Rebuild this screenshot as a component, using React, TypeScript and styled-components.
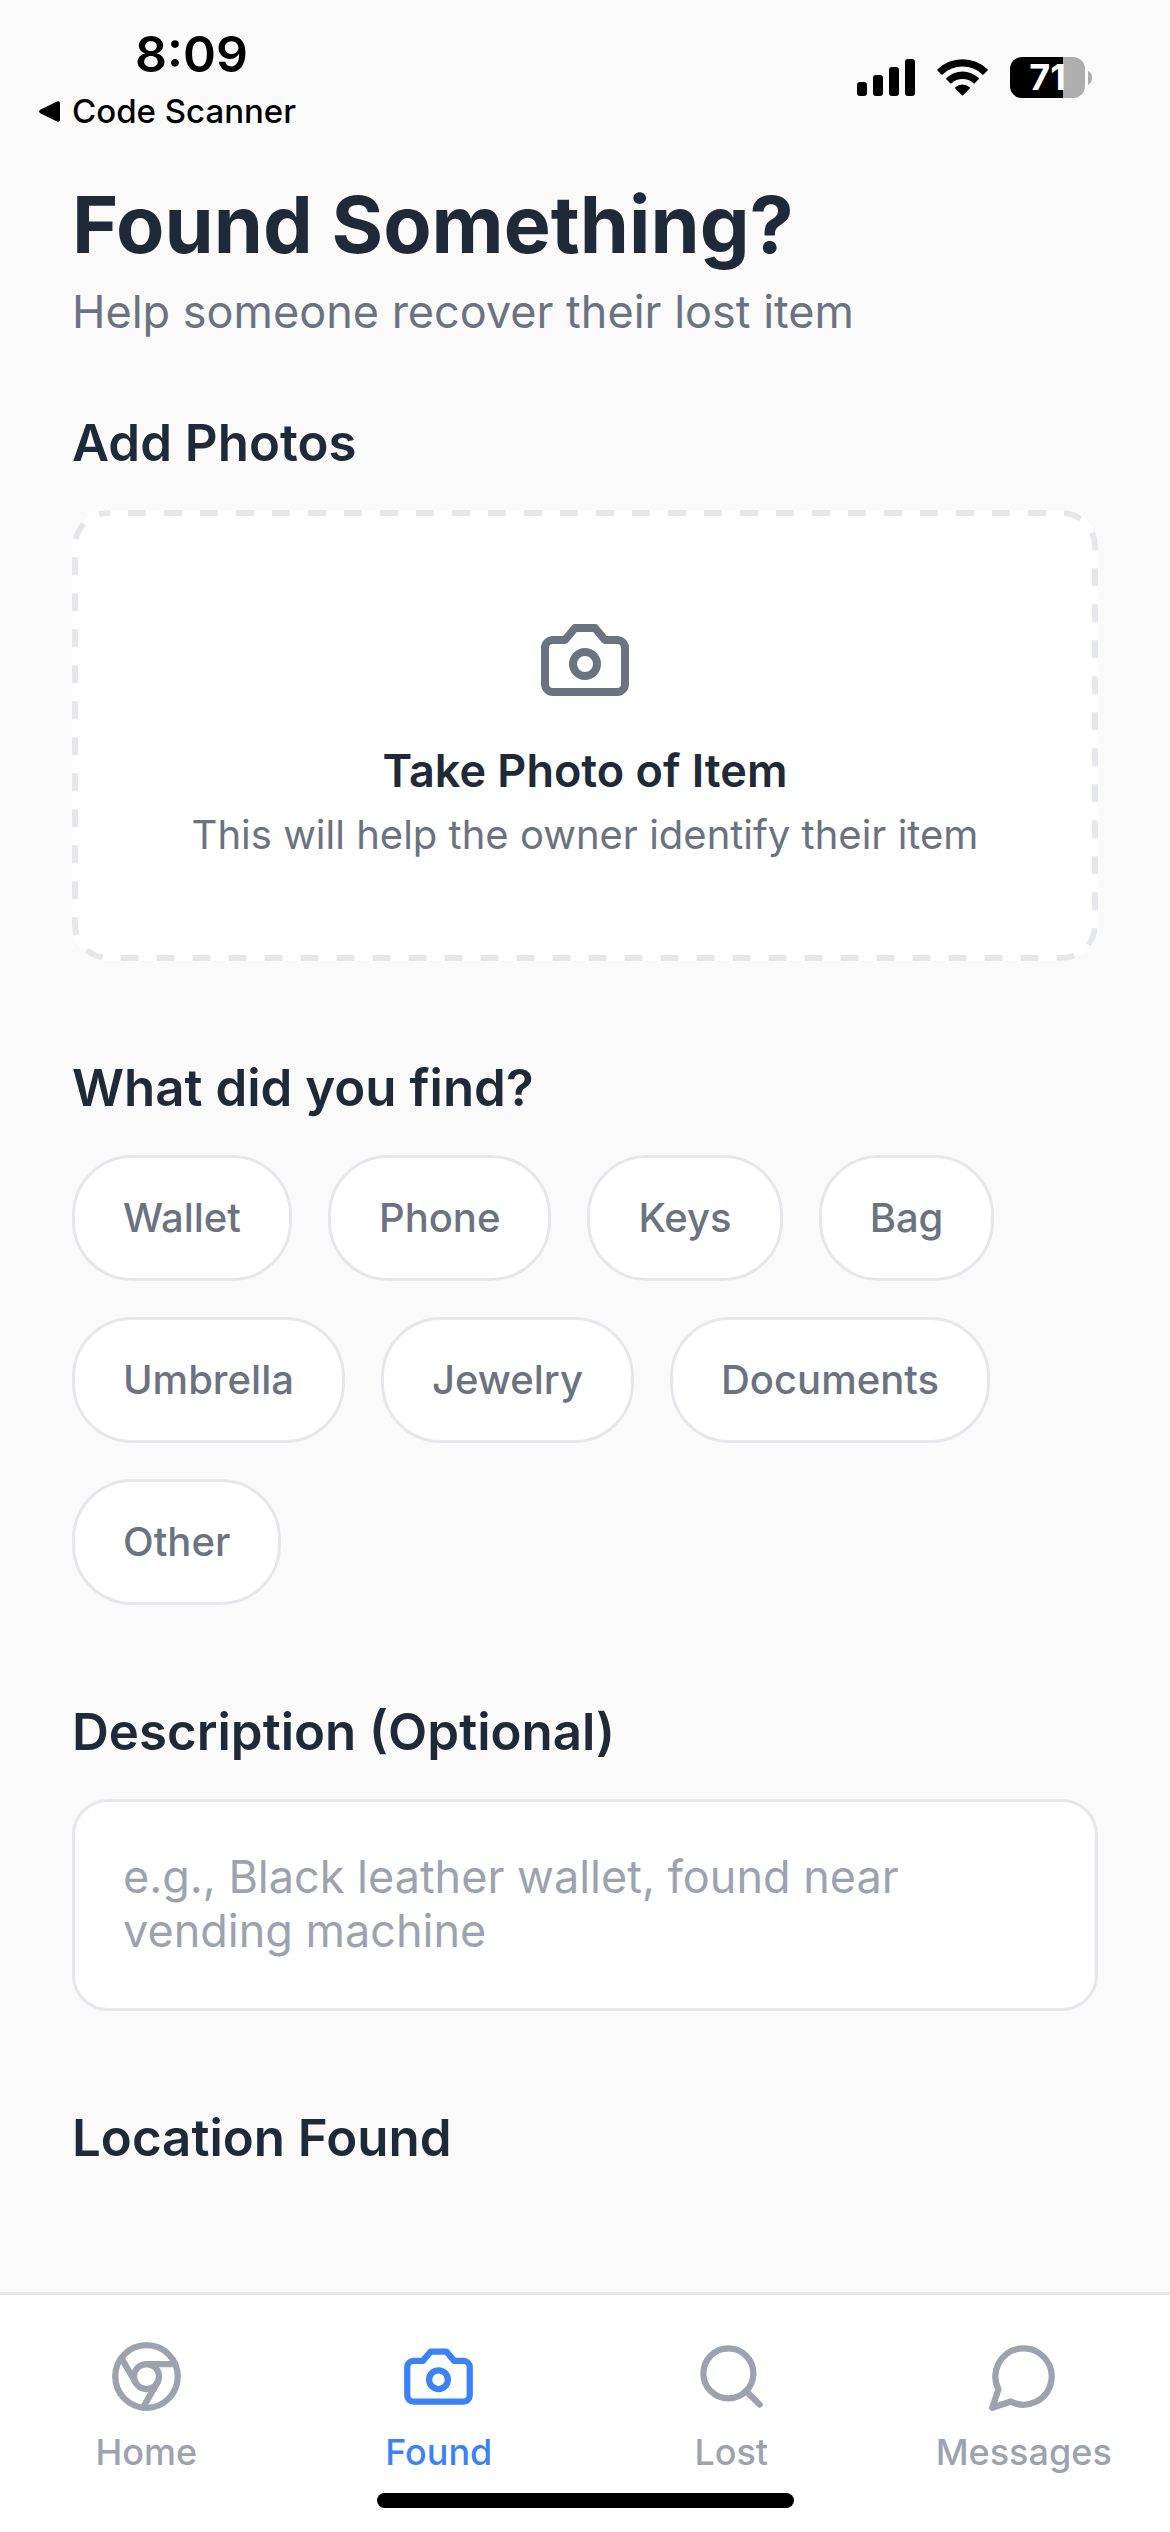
import React, { useState } from "react";
import styled, { createGlobalStyle } from "styled-components";

const color = {
  page: "#fafafa",
  surface: "#ffffff",
  line: "#e5e7eb",
  ink: "#1f2937",
  muted: "#6b7280",
  faint: "#9ca3af",
  accent: "#3b82f6",
};

const GlobalStyle = createGlobalStyle`
  *, *::before, *::after { box-sizing: border-box; }
  body {
    margin: 0;
    background: ${color.page};
    color: ${color.ink};
    font-family: Inter, "Liberation Sans", sans-serif;
  }
  button, textarea { font: inherit; color: inherit; }
  h1, h2, p { margin: 0; }
`;

const Screen = styled.div`
  display: flex;
  flex-direction: column;
  min-height: 100vh;
`;

/* ---------- status bar ---------- */

const StatusBar = styled.header`
  display: flex;
  justify-content: space-between;
  align-items: flex-start;
  padding: 24px 78px 8px 39px;
  color: #000;
`;

const StatusLeft = styled.div`
  display: flex;
  flex-direction: column;
  align-items: flex-start;
  gap: 6px;
`;

const Clock = styled.time`
  padding-left: 96px;
  font-size: 50px;
  line-height: 60px;
  font-weight: 600;
`;

const BackLink = styled.button`
  display: flex;
  align-items: center;
  gap: 12px;
  padding: 0;
  border: 0;
  background: none;
  font-size: 33px;
  line-height: 42px;
  font-weight: 500;
  cursor: pointer;
`;

const StatusIcons = styled.div`
  display: flex;
  align-items: center;
  gap: 22px;
  padding-top: 33px;
`;

const Battery = styled.div`
  display: flex;
  align-items: center;
  gap: 3px;
`;

const BatteryBody = styled.div`
  display: flex;
  align-items: center;
  justify-content: center;
  width: 75px;
  height: 41px;
  border-radius: 12px;
  background: linear-gradient(to right, #000 71%, #aeaeae 71%);
  color: #fff;
  font-size: 36px;
  line-height: 41px;
  font-weight: 700;
`;

/* ---------- form ---------- */

const Content = styled.main`
  flex: 1;
  display: flex;
  flex-direction: column;
  gap: 96px;
  padding: 36px 72px 72px;
`;

const Intro = styled.div`
  display: flex;
  flex-direction: column;
  gap: 72px;
`;

const Heading = styled.div`
  display: flex;
  flex-direction: column;
  gap: 12px;
`;

const Title = styled.h1`
  font-size: 79px;
  line-height: 96px;
  font-weight: 700;
`;

const Subtitle = styled.p`
  font-size: 45px;
  line-height: 56px;
  color: ${color.muted};
`;

const Section = styled.section`
  display: flex;
  flex-direction: column;
  gap: 36px;
`;

const SectionTitle = styled.h2`
  font-size: 51px;
  line-height: 62px;
  font-weight: 600;
`;

const PhotoButton = styled.button`
  position: relative;
  display: flex;
  flex-direction: column;
  align-items: center;
  padding: 102px 48px;
  border: 0;
  border-radius: 36px;
  background: ${color.surface};
  color: ${color.muted};
  cursor: pointer;
`;

const DashedOutline = styled.svg`
  position: absolute;
  inset: 0;
  width: 100%;
  height: 100%;
  overflow: hidden;
  border-radius: 36px;

  rect {
    x: 3px;
    y: 3px;
    width: calc(100% - 6px);
    height: calc(100% - 6px);
    rx: 33px;
    fill: none;
    stroke: ${color.line};
    stroke-width: 6px;
    stroke-dasharray: 18 18;
    stroke-dashoffset: 16;
  }
`;

const PhotoTitle = styled.span`
  margin-top: 36px;
  font-size: 45px;
  line-height: 54px;
  font-weight: 600;
  color: ${color.ink};
`;

const PhotoHint = styled.span`
  margin-top: 12px;
  font-size: 40px;
  line-height: 49px;
`;

const Chips = styled.div`
  display: flex;
  flex-wrap: wrap;
  gap: 36px;
`;

const Chip = styled.button<{ $selected: boolean }>`
  padding: 36px 48px;
  border: 3px solid ${(p) => (p.$selected ? color.accent : color.line)};
  border-radius: 60px;
  background: ${color.surface};
  color: ${(p) => (p.$selected ? color.accent : color.muted)};
  font-size: 40px;
  line-height: 48px;
  font-weight: 500;
  cursor: pointer;
`;

const DescriptionField = styled.textarea`
  display: block;
  width: 100%;
  min-height: 212px;
  padding: 48px;
  border: 3px solid ${color.line};
  border-radius: 36px;
  background: ${color.surface};
  color: ${color.ink};
  font-size: 45px;
  line-height: 54px;
  resize: none;
  overflow: hidden;
  outline: none;

  &::placeholder {
    color: ${color.faint};
    opacity: 1;
  }
`;

/* ---------- tab bar ---------- */

const TabBar = styled.footer`
  position: sticky;
  bottom: 0;
  display: flex;
  flex-direction: column;
  align-items: center;
  gap: 19px;
  padding: 44px 0 24px;
  border-top: 3px solid ${color.line};
  background: ${color.surface};
`;

const Tabs = styled.nav`
  display: grid;
  grid-template-columns: repeat(4, 1fr);
  width: 100%;
`;

const Tab = styled.a<{ $active?: boolean }>`
  display: flex;
  flex-direction: column;
  align-items: center;
  gap: 16px;
  color: ${(p) => (p.$active ? color.accent : color.faint)};
  font-size: 36px;
  line-height: 44px;
  font-weight: 500;
  text-decoration: none;
`;

const HomeIndicator = styled.div`
  width: 417px;
  height: 15px;
  border-radius: 8px;
  background: #000;
`;

/* ---------- icons ---------- */

const LineIcon = ({ size, children }: { size: number; children: React.ReactNode }) => (
  <svg
    width={size}
    height={size}
    viewBox="0 0 24 24"
    fill="none"
    stroke="currentColor"
    strokeWidth={2}
    strokeLinecap="round"
    strokeLinejoin="round"
    aria-hidden="true"
  >
    {children}
  </svg>
);

const CameraShape = () => (
  <>
    <path d="M14.5 4h-5L7 7H4a2 2 0 0 0-2 2v9a2 2 0 0 0 2 2h16a2 2 0 0 0 2-2V9a2 2 0 0 0-2-2h-3l-2.5-3z" />
    <circle cx="12" cy="13" r="3" />
  </>
);

const ChromeShape = () => (
  <>
    <circle cx="12" cy="12" r="10" />
    <circle cx="12" cy="12" r="4" />
    <path d="M21.17 8H12M3.95 6.06 8.54 14M10.88 21.94 15.46 14" />
  </>
);

const SearchShape = () => (
  <>
    <circle cx="11" cy="11" r="8" />
    <path d="m21 21-4.3-4.3" />
  </>
);

const MessageShape = () => <path d="M7.9 20A9 9 0 1 0 4 16.1L2 22Z" />;

const BackTriangle = () => (
  <svg width="21" height="21" viewBox="0 0 21 21" aria-hidden="true">
    <path d="M1.2 8.8 18 .6Q21-.6 21 2.4V18.6Q21 21.6 18 20.4L1.2 12.2Q-1 10.5 1.2 8.8Z" />
  </svg>
);

const SignalIcon = () => (
  <svg width="58" height="37" viewBox="0 0 58 37" role="img" aria-label="Signal">
    <rect x="0" y="23" width="10" height="14" rx="3" />
    <rect x="16" y="16" width="10" height="21" rx="3" />
    <rect x="32" y="8" width="10" height="29" rx="3" />
    <rect x="48" y="0" width="10" height="37" rx="3" />
  </svg>
);

const WifiIcon = () => (
  <svg width="51" height="37" viewBox="0 0 51 37" role="img" aria-label="Wi-Fi">
    <path d="M.5 10.3A36 36 0 0 1 50.5 10.3Q51 11 50.5 11.5L46.6 15.4Q46 16 45.4 15.4A29 29 0 0 0 5.6 15.4Q5 16 4.4 15.4L.5 11.5Q0 11 .5 10.3Z" />
    <path d="M9.3 19.1A23.5 23.5 0 0 1 41.7 19.1Q42.2 19.7 41.7 20.3L37.7 24.3Q37.1 24.8 36.5 24.3A16.5 16.5 0 0 0 14.5 24.3Q13.9 24.8 13.3 24.3L9.3 20.3Q8.8 19.7 9.3 19.1Z" />
    <path d="M18.3 28.3A11 11 0 0 1 32.7 28.3Q33.3 29 32.7 29.6L26.1 36.2Q25.5 36.8 24.9 36.2L18.3 29.6Q17.7 29 18.3 28.3Z" />
  </svg>
);

const BatteryTip = () => (
  <svg width="4" height="14" viewBox="0 0 4 14" aria-hidden="true">
    <path d="M0 0Q4 2 4 7T0 14Z" fill="#aeaeae" />
  </svg>
);

const categories = ["Wallet", "Phone", "Keys", "Bag", "Umbrella", "Jewelry", "Documents", "Other"];

const tabs = [
  { label: "Home", shape: <ChromeShape /> },
  { label: "Found", shape: <CameraShape />, active: true },
  { label: "Lost", shape: <SearchShape /> },
  { label: "Messages", shape: <MessageShape /> },
];

export default function App() {
  const [category, setCategory] = useState<string | null>(null);

  return (
    <>
      <GlobalStyle />
      <Screen>
        <StatusBar>
          <StatusLeft>
            <Clock>8:09</Clock>
            <BackLink type="button">
              <BackTriangle />
              Code Scanner
            </BackLink>
          </StatusLeft>
          <StatusIcons>
            <SignalIcon />
            <WifiIcon />
            <Battery>
              <BatteryBody>71</BatteryBody>
              <BatteryTip />
            </Battery>
          </StatusIcons>
        </StatusBar>

        <Content>
          <Intro>
            <Heading>
              <Title>Found Something?</Title>
              <Subtitle>Help someone recover their lost item</Subtitle>
            </Heading>
            <Section>
              <SectionTitle>Add Photos</SectionTitle>
              <PhotoButton type="button">
                <DashedOutline aria-hidden="true">
                  <rect />
                </DashedOutline>
                <LineIcon size={96}>
                  <CameraShape />
                </LineIcon>
                <PhotoTitle>Take Photo of Item</PhotoTitle>
                <PhotoHint>This will help the owner identify their item</PhotoHint>
              </PhotoButton>
            </Section>
          </Intro>

          <Section>
            <SectionTitle>What did you find?</SectionTitle>
            <Chips>
              {categories.map((name) => (
                <Chip
                  key={name}
                  type="button"
                  $selected={category === name}
                  aria-pressed={category === name}
                  onClick={() => setCategory(category === name ? null : name)}
                >
                  {name}
                </Chip>
              ))}
            </Chips>
          </Section>

          <Section>
            <SectionTitle>
              <label htmlFor="description">Description (Optional)</label>
            </SectionTitle>
            <DescriptionField
              id="description"
              rows={2}
              placeholder="e.g., Black leather wallet, found near vending machine"
            />
          </Section>

          <Section>
            <SectionTitle>Location Found</SectionTitle>
          </Section>
        </Content>

        <TabBar>
          <Tabs>
            {tabs.map((tab) => (
              <Tab
                key={tab.label}
                href={`#${tab.label.toLowerCase()}`}
                $active={tab.active}
                aria-current={tab.active ? "page" : undefined}
              >
                <LineIcon size={75}>{tab.shape}</LineIcon>
                {tab.label}
              </Tab>
            ))}
          </Tabs>
          <HomeIndicator />
        </TabBar>
      </Screen>
    </>
  );
}
